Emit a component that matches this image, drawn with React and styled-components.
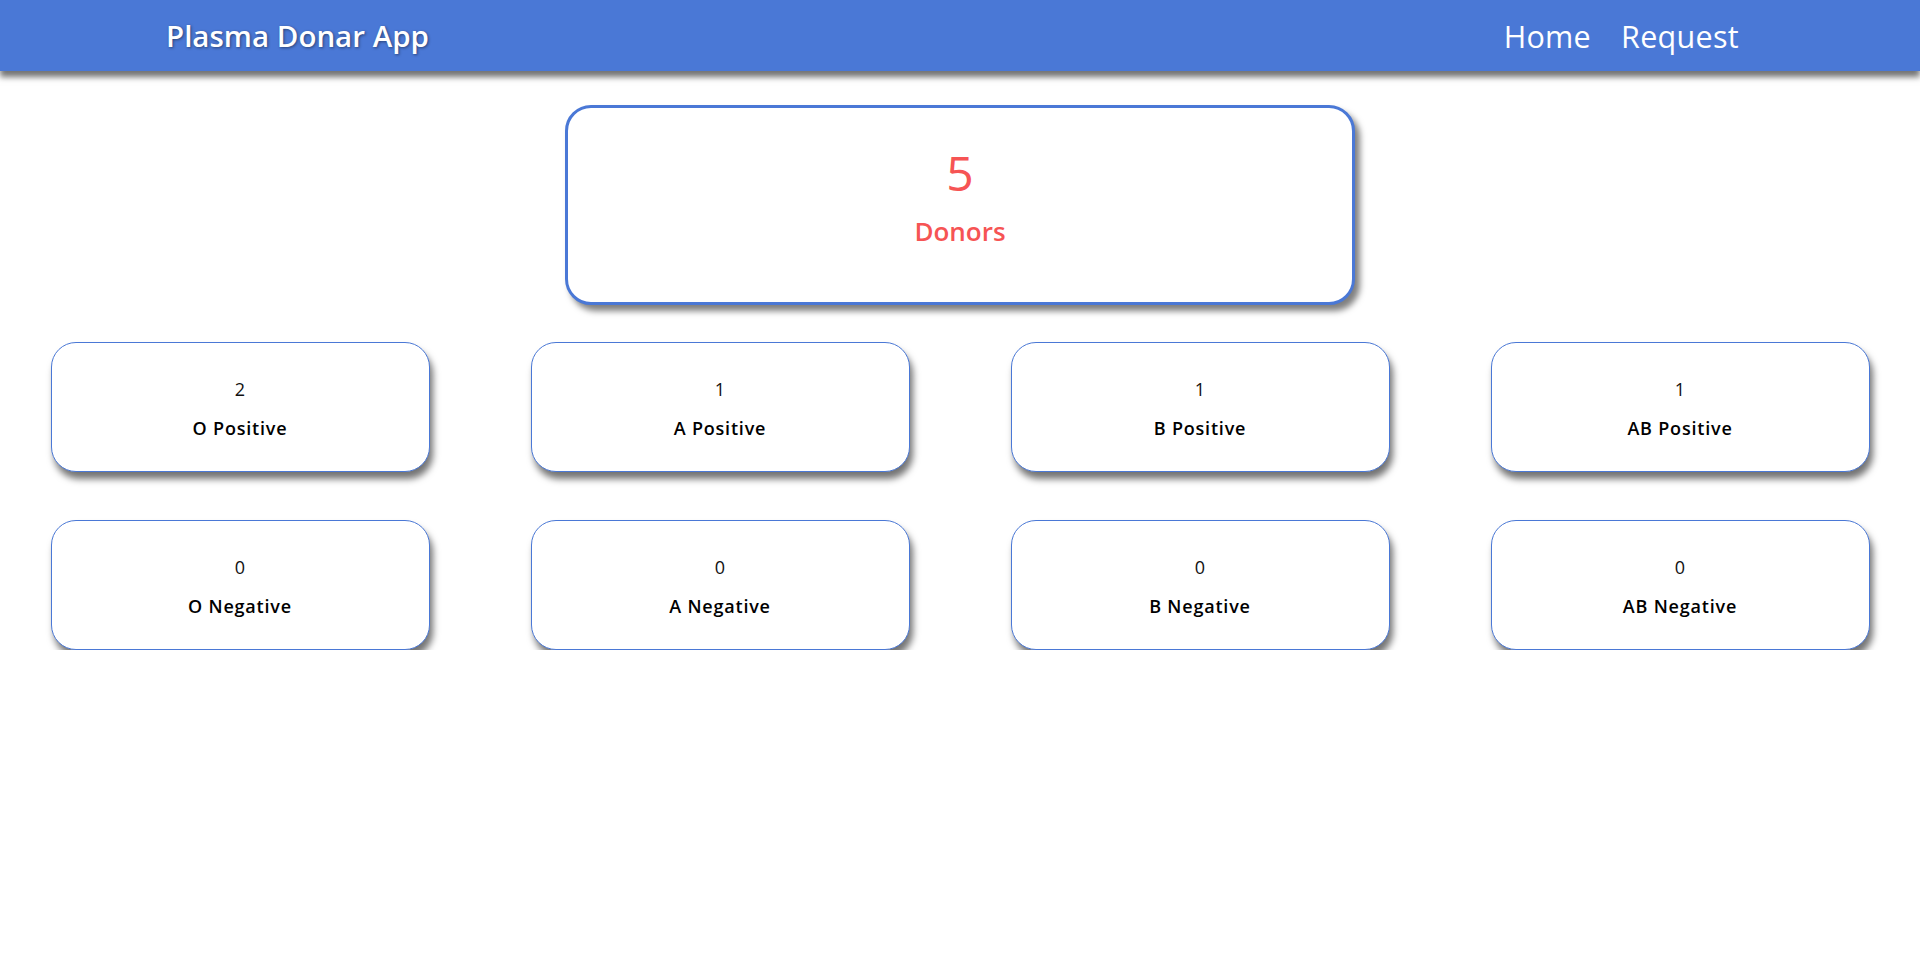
import React from "react";
import styled, { createGlobalStyle } from "styled-components";

const GlobalStyle = createGlobalStyle`
  html, body {
    margin: 0;
    padding: 0;
    background: #ffffff;
    font-family: "Open Sans", "Noto Sans", sans-serif;
  }
  * { box-sizing: border-box; }
`;

const Header = styled.header`
  height: 71px;
  background: #4a78d6;
  box-shadow: 0 6px 6px rgba(0, 0, 0, 0.55);
  display: flex;
  align-items: center;
  justify-content: space-between;
  padding: 0 181px 0 166px;
  position: relative;
  z-index: 1;
`;

const Brand = styled.div`
  color: #ffffff;
  font-size: 29.5px;
  font-weight: 600;
  line-height: 38px;
  text-shadow: 1px 1px 3px rgba(0, 0, 0, 0.45);
`;

const Nav = styled.nav`
  display: flex;
  gap: 30px;
`;

const NavLink = styled.a`
  color: #ffffff;
  font-size: 30.5px;
  font-weight: 400;
  line-height: 40px;
  letter-spacing: 0.3px;
  text-decoration: none;
`;

const Main = styled.main`
  display: flex;
  flex-direction: column;
  align-items: center;
  padding-top: 34px;
`;

const TotalCard = styled.div`
  width: 790px;
  height: 200px;
  border: 3px solid #4a78d6;
  border-radius: 26px;
  box-shadow: 5px 6px 6px rgba(0, 0, 0, 0.5);
  background: #fff;
  display: flex;
  flex-direction: column;
  align-items: center;
  padding-top: 36px;
  gap: 12px;
`;

const TotalCount = styled.div`
  color: #f65454;
  font-size: 48px;
  font-weight: 400;
  line-height: 58px;
`;

const TotalLabel = styled.div`
  color: #f65454;
  font-size: 26px;
  font-weight: 600;
  line-height: 35px;
`;

const Grid = styled.div`
  width: 100%;
  display: grid;
  grid-template-columns: repeat(4, 1fr);
  justify-items: center;
  row-gap: 48px;
  margin-top: 37px;
`;

const GroupCard = styled.div`
  width: 379px;
  height: 130px;
  border: 1px solid #4a78d6;
  border-radius: 25px;
  box-shadow: 3px 7px 7px rgba(0, 0, 0, 0.55);
  background: #fff;
  display: flex;
  flex-direction: column;
  align-items: center;
  padding-top: 34px;
  gap: 15px;
`;

const GroupCount = styled.div`
  color: #111;
  font-size: 18px;
  font-weight: 400;
  line-height: 24px;
`;

const GroupLabel = styled.div`
  color: #000;
  font-size: 18px;
  font-weight: 600;
  line-height: 24px;
  letter-spacing: 0.8px;
`;

const groups = [
  { label: "O Positive", count: 2 },
  { label: "A Positive", count: 1 },
  { label: "B Positive", count: 1 },
  { label: "AB Positive", count: 1 },
  { label: "O Negative", count: 0 },
  { label: "A Negative", count: 0 },
  { label: "B Negative", count: 0 },
  { label: "AB Negative", count: 0 },
];

export default function App() {
  return (
    <>
      <GlobalStyle />
      <Header>
        <Brand>Plasma Donar App</Brand>
        <Nav>
          <NavLink href="#">Home</NavLink>
          <NavLink href="#">Request</NavLink>
        </Nav>
      </Header>
      <Main>
        <TotalCard>
          <TotalCount>5</TotalCount>
          <TotalLabel>Donors</TotalLabel>
        </TotalCard>
        <Grid>
          {groups.map((g) => (
            <GroupCard key={g.label}>
              <GroupCount>{g.count}</GroupCount>
              <GroupLabel>{g.label}</GroupLabel>
            </GroupCard>
          ))}
        </Grid>
      </Main>
    </>
  );
}
